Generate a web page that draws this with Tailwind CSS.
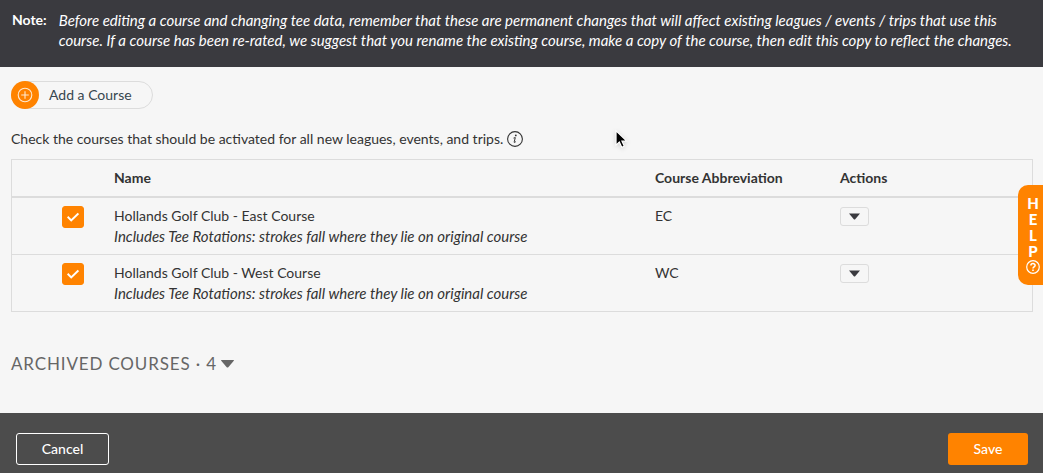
<!DOCTYPE html>
<html lang="en">
<head>
  <meta charset="UTF-8" />
  <meta name="viewport" content="width=device-width, initial-scale=1.0"/>
  <title>Courses</title>
  <script src="https://cdn.jsdelivr.net/npm/@tailwindcss/browser@4"></script>
</head>
<body class="bg-[#f6f6f6] min-h-screen flex flex-col font-['Lato',sans-serif] text-[14px] leading-5 text-[#333]">

  <div class="bg-[#3a3a3f] text-white flex gap-3 pl-3 pr-4 pt-[10px] pb-[17px]">
    <strong class="font-bold">Note:</strong>
    <p class="italic text-[15px] leading-5">Before editing a course and changing tee data, remember that these are permanent changes that will affect existing leagues / events / trips that use this course. If a course has been re-rated, we suggest that you rename the existing course, make a copy of the course, then edit this copy to reflect the changes.</p>
  </div>

  <main class="pl-[11px] pr-[10px] pt-[14px] pb-9">
    <button type="button" class="flex items-center gap-[10px] h-7 pr-5 rounded-full border border-[#dcdcdc] text-[#37474f]">
      <span class="w-7 h-7 -ml-px rounded-full bg-[#ff8300] flex items-center justify-center">
        <svg class="w-4 h-4" viewBox="0 0 16 16" fill="none" stroke="#ffe9d0" stroke-width="1.1">
          <circle cx="8" cy="8" r="6.8"/>
          <path d="M8 4.2v7.6M4.2 8h7.6"/>
        </svg>
      </span>
      Add a Course
    </button>

    <p class="flex items-center gap-1 mt-5 mb-[10px]">
      Check the courses that should be activated for all new leagues, events, and trips.
      <svg class="w-4 h-4" viewBox="0 0 16 16" fill="none">
        <circle cx="8" cy="8" r="7.4" stroke="#333" stroke-width="1.1"/>
        <circle cx="8.8" cy="4.4" r=".9" fill="#333"/>
        <path d="M6.5 7.1l1.8-.5-1.1 4.3c-.2.9.6.8 1.6-.3" stroke="#333" stroke-width="1"/>
      </svg>
    </p>

    <table class="w-full table-fixed border-separate border-spacing-0 border border-[#dcdcdc] text-left">
      <thead>
        <tr>
          <th class="w-[94px] border-b-2 border-[#dcdcdc]"></th>
          <th class="px-2 py-2 border-b-2 border-[#dcdcdc] font-bold">Name</th>
          <th class="w-[185px] px-2 border-b-2 border-[#dcdcdc] font-bold">Course Abbreviation</th>
          <th class="w-[200px] px-2 border-b-2 border-[#dcdcdc] font-bold">Actions</th>
        </tr>
      </thead>
      <tbody class="align-top">
        <tr>
          <td class="pl-[50px] pt-2 border-b border-[#dcdcdc]">
            <div class="grid w-[22px]">
              <input id="east" type="checkbox" checked class="col-start-1 row-start-1 appearance-none w-[22px] h-[22px] rounded-[3px] border border-[#ff8300] checked:bg-[#ff8300]"/>
              <svg class="col-start-1 row-start-1 place-self-center w-3 h-3 pointer-events-none" viewBox="0 0 12 12" fill="none" stroke="#fff" stroke-width="2"><path d="M.6 5.8l3.6 3.6 7.2-7"/></svg>
            </div>
          </td>
          <td class="px-2 py-2 border-b border-[#dcdcdc]">
            <label for="east" class="block">Hollands Golf Club - East Course</label>
            <p class="italic text-[15px] leading-5">Includes Tee Rotations: strokes fall where they lie on original course</p>
          </td>
          <td class="px-2 py-2 border-b border-[#dcdcdc]">EC</td>
          <td class="px-2 py-[9px] border-b border-[#dcdcdc]">
            <button type="button" aria-label="Actions for East Course" class="flex items-center justify-center w-[29px] h-[19px] rounded-[3px] border border-[#dcdcdc]">
              <svg class="w-[11px] h-[7px]" viewBox="0 0 11 7" fill="#3a3a3f"><path d="M0 .5h11L6.2 6.2q-.7.7-1.4 0z"/></svg>
            </button>
          </td>
        </tr>
        <tr>
          <td class="pl-[50px] pt-2">
            <div class="grid w-[22px]">
              <input id="west" type="checkbox" checked class="col-start-1 row-start-1 appearance-none w-[22px] h-[22px] rounded-[3px] border border-[#ff8300] checked:bg-[#ff8300]"/>
              <svg class="col-start-1 row-start-1 place-self-center w-3 h-3 pointer-events-none" viewBox="0 0 12 12" fill="none" stroke="#fff" stroke-width="2"><path d="M.6 5.8l3.6 3.6 7.2-7"/></svg>
            </div>
          </td>
          <td class="px-2 py-2">
            <label for="west" class="block">Hollands Golf Club - West Course</label>
            <p class="italic text-[15px] leading-5">Includes Tee Rotations: strokes fall where they lie on original course</p>
          </td>
          <td class="px-2 py-2">WC</td>
          <td class="px-2 py-[9px]">
            <button type="button" aria-label="Actions for West Course" class="flex items-center justify-center w-[29px] h-[19px] rounded-[3px] border border-[#dcdcdc]">
              <svg class="w-[11px] h-[7px]" viewBox="0 0 11 7" fill="#3a3a3f"><path d="M0 .5h11L6.2 6.2q-.7.7-1.4 0z"/></svg>
            </button>
          </td>
        </tr>
      </tbody>
    </table>

    <button type="button" class="flex items-center gap-1 mt-10 text-[17px] leading-6 tracking-wider text-[#666]">
      ARCHIVED COURSES · 4
      <svg class="w-[13px] h-[8px]" viewBox="0 0 13 8" fill="#666"><path d="M.5 0h12q.8.1.3.8L7.5 6.9q-1 1-2 0L.2.8Q-.2.1.5 0z"/></svg>
    </button>
  </main>

  <footer class="mt-auto flex justify-between bg-[#4c4c4c] pl-4 pr-[15px] pt-5 pb-2 text-white font-medium">
    <button type="button" class="w-[93px] h-8 rounded-[3px] border border-white">Cancel</button>
    <button type="button" class="w-20 h-8 rounded-[3px] bg-[#ff8300]">Save</button>
  </footer>

  <button type="button" aria-label="Help" class="fixed right-0 top-[185px] w-[25px] h-[100px] pl-[5px] pb-px rounded-l-[10px] bg-[#ff8300] text-white text-[15px] leading-4 font-black flex flex-col items-center justify-center">
    <span>H</span>
    <span>E</span>
    <span>L</span>
    <span>P</span>
    <svg class="w-[14px] h-[14px] mt-px" viewBox="0 0 14 14" fill="none" stroke="#fff">
      <circle cx="7" cy="7" r="6.3" stroke-width="1.2"/>
      <path d="M4.9 5.6C4.9 2.9 9.1 3 9.1 5.4 9.1 6.8 7 6.9 7 8.4" stroke-width="1.5"/>
      <path d="M7 9.4v1.6" stroke-width="1.6"/>
    </svg>
  </button>

  <!-- pointer -->
  <svg class="absolute left-[613px] top-[128px] w-4 h-[22px] drop-shadow-sm pointer-events-none" viewBox="0 0 14 20">
    <path d="M2.5 2.5v13l3-2.8 2.2 4.8 2.2-1-2.1-4.7h4.2z" fill="#000" stroke="#fff" stroke-width="1"/>
  </svg>

</body>
</html>
